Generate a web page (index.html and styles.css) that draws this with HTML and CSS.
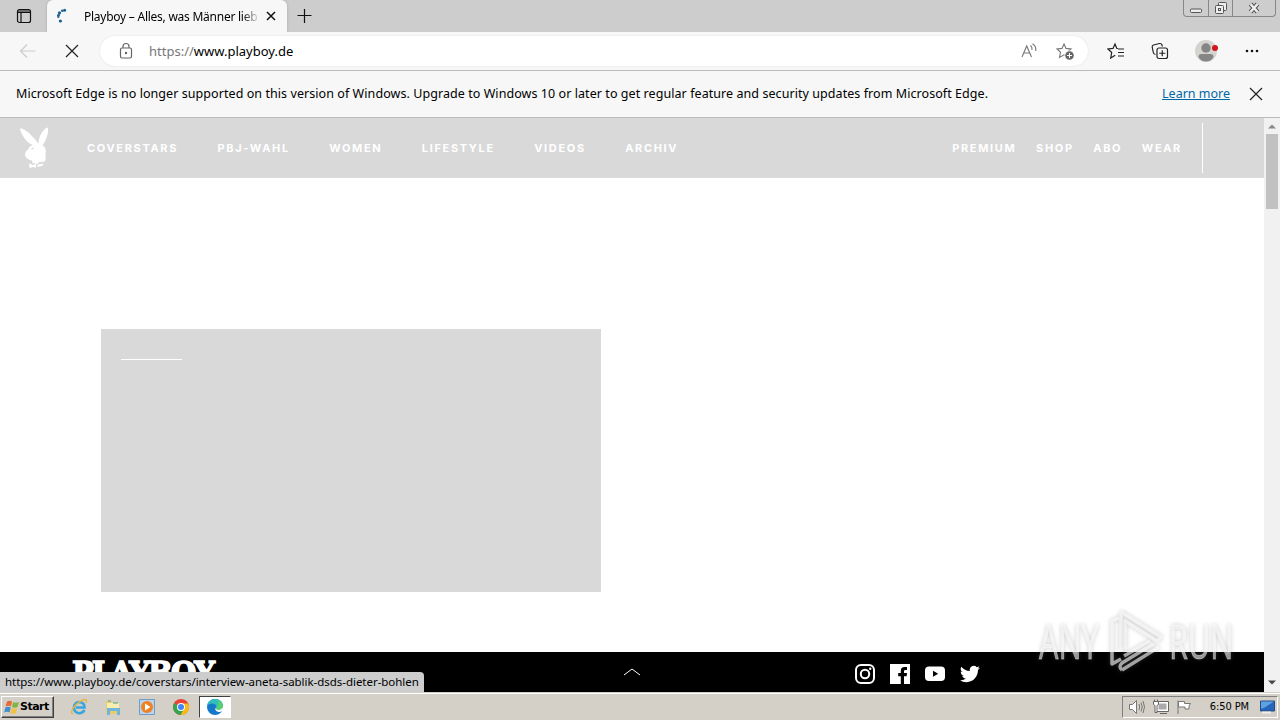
FILE: index.html
```html
<!DOCTYPE html>
<html lang="de">

<head>
    <meta charset="UTF-8">
    <meta name="viewport" content="width=device-width, initial-scale=1.0">
    <title>Playboy – Alles, was Männer lieben</title>
    <link rel="stylesheet" href="styles.css">
</head>

<body>

    <!-- Browser tabs -->
    <div class="tabs">
        <div class="tab-menu">
            <svg width="16" height="16" viewBox="0 0 16 16" fill="none" stroke="#111" stroke-width="1.2">
                <rect x="1.5" y="1.5" width="13" height="13" rx="2" />
                <path d="M2 3h12M2 4.500h12M5 5v9" />
            </svg>
        </div>
        <div class="tab">
            <svg class="spinner" width="16" height="16" viewBox="0 0 16 16" fill="#1b6292">
                <circle cx="9.6" cy="2.3" r="1.5" /><circle cx="7.3" cy="2.8" r="1.3" />
                <circle cx="4.5" cy="4.9" r="1.6" /><circle cx="3.5" cy="7.3" r="1.4" />
                <circle cx="3.3" cy="8.9" r="1.1" /><circle cx="5.4" cy="13" r="1.6" />
            </svg>
            <span class="tab-title">Playboy – Alles, was Männer lieb</span>
            <svg class="tab-close" width="10" height="10" viewBox="0 0 10 10" stroke="#111" stroke-width="1.5">
                <path d="M1 1l8 8M9 1l-8 8" />
            </svg>
        </div>
        <svg class="tab-new" width="16" height="16" viewBox="0 0 16 16" stroke="#111" stroke-width="1.2">
            <path d="M7.500 1v14M.5 7.500h14" />
        </svg>
        <div class="window-buttons">
            <span class="win-min"><svg width="14" height="6" viewBox="0 0 14 6"><rect x="1.5" y="1" width="11" height="3.5" rx="1" fill="#eee" stroke="#555" /></svg></span>
            <span class="win-max"><svg width="14" height="14" viewBox="0 0 14 14" fill="#eee" stroke="#555"><rect x="4.500" y="1.500" width="8" height="8" rx="1" /><rect x="1.500" y="4.500" width="8" height="8" rx="1" /><rect x="4.500" y="7.500" width="2" height="2" /></svg></span>
            <span class="win-close"><svg width="14" height="14" viewBox="0 0 14 14"><path d="M3.500 3l7 8M10.500 3l-7 8" stroke="#555" stroke-width="4.500" /><path d="M3.500 3l7 8M10.500 3l-7 8" stroke="#eee" stroke-width="2.500" /></svg></span>
        </div>
    </div>

    <!-- Address bar -->
    <div class="toolbar">
        <svg class="back" width="18" height="16" viewBox="0 0 18 16" fill="none" stroke="#ccc" stroke-width="1.2">
            <path d="M16.500 8H2M8 1.500L1.500 8L8 14.500" />
        </svg>
        <svg class="stop" width="14" height="14" viewBox="0 0 14 14" stroke="#222" stroke-width="1.200">
            <path d="M1 1l12 12M13 1L1 13" />
        </svg>
        <div class="address">
            <svg width="14" height="18" viewBox="0 0 14 18" fill="none" stroke="#666" stroke-width="1.200">
                <rect x="1.500" y="6" width="11" height="10" rx="1.500" />
                <path d="M4 6V4.500a3 3 0 0 1 6 0V6" />
                <circle cx="7" cy="11" r=".6" fill="#666" />
            </svg>
            <span class="url"><span class="scheme">https://</span><span class="host">www.playboy.de</span></span>
            <svg class="read" width="18" height="18" viewBox="0 0 18 18" fill="none" stroke="#777" stroke-width="1.100">
                <path d="M2 15L6.700 4L11.500 15M3.700 11h6M10.500 3.500q2 1.500 1.500 4.500M12.500 1.700q4 2.500 3.200 7.300" />
            </svg>
            <svg class="fav" width="19" height="19" viewBox="0 0 19 19">
                <path d="M8 2l2 4.400 5 .6-3.500 3.300 1 5-4.500-2.500L3.500 15.500l1-5.200L1 7l5-.6z" fill="none" stroke="#777" stroke-width="1.100" />
                <circle cx="13.500" cy="13.500" r="5" fill="#fff" />
                <circle cx="13.500" cy="13.500" r="4.300" fill="#666" />
                <path d="M13.500 11v5M11 13.500h5" stroke="#fff" />
            </svg>
        </div>
        <svg class="favorites" width="18" height="18" viewBox="0 0 18 18" fill="none" stroke="#222" stroke-width="1.200">
            <path d="M11 6.500L9.700 6.300L8 2L6 6.400L1 7l3.700 3.500l-1 5.500l4.500-2.800M11 7h6M11 10.500h6M11 14h6" />
        </svg>
        <svg class="collections" width="18" height="18" viewBox="0 0 18 18" fill="none" stroke="#222" stroke-width="1.200">
            <path d="M4.500 12.500Q2.500 12 2.300 10.500L1.200 5Q1 3.500 2.500 3L8.500 1.500Q10.500 1.300 11 3L11.300 4.500" />
            <rect x="6" y="6" width="10.500" height="10.500" rx="2" />
            <path d="M11.250 8.300v6M8.300 11.250h6" />
        </svg>
        <svg class="profile" width="24" height="22" viewBox="0 0 24 22">
            <circle cx="11" cy="11" r="11" fill="#d3d3d0" />
            <circle cx="11" cy="8" r="4.700" fill="#858585" />
            <path d="M3.500 17q0-3 3-3h9q3 0 3 3q-2.500 4.500-7.500 4.500T3.500 17z" fill="#858585" />
            <circle cx="20" cy="8" r="3" fill="#d4141c" />
        </svg>
        <svg class="more" width="14" height="4" viewBox="0 0 14 4" fill="#111">
            <circle cx="2" cy="2" r="1.300" /><circle cx="7" cy="2" r="1.300" /><circle cx="12" cy="2" r="1.300" />
        </svg>
    </div>

    <div class="notice">
        <span class="notice-text">Microsoft Edge is no longer supported on this version of Windows. Upgrade to Windows 10 or later to get regular feature and security updates from Microsoft Edge.</span>
        <a class="learn" href="#">Learn more</a>
        <svg width="14" height="14" viewBox="0 0 14 14" stroke="#222" stroke-width="1.200">
            <path d="M1 1l12 12M13 1L1 13" />
        </svg>
    </div>

    <div class="viewport">
        <div class="page">
            <header class="header">
                <svg class="bunny" width="30" height="42" viewBox="0 0 30 42" fill="#fff">
                    <path d="M.5 1Q-.5 4 3 9Q7 16 13 18Q9 19 8.500 22Q4.500 25 5 28.500Q7 33 12 33.500L12.500 36L18 37L19 35L25 34.500Q26 31 25.500 27Q27 21 22.500 18.500Q27 12 28 5Q28.500 0 27 .5Q22.500 3 20 9Q18.500 13 18.500 16.500Q14 11 9 6Q4 2 .5 1z" />
                    <path d="M10.500 22.500l2.500-2 1 1-2 1z" fill="#d9d9d9" />
                    <path d="M9 36.500l4 1.500 3-1.200v4l-3-.8-3.500 1zM17 38l6-1.500v2l-5 1.500z" />
                </svg>
                <nav class="menu">
                    <a>COVERSTARS</a>
                    <a>PBJ-WAHL</a>
                    <a>WOMEN</a>
                    <a>LIFESTYLE</a>
                    <a>VIDEOS</a>
                    <a>ARCHIV</a>
                </nav>
                <nav class="menu shop-menu">
                    <a>PREMIUM</a>
                    <a>SHOP</a>
                    <a>ABO</a>
                    <a>WEAR</a>
                </nav>
                <div class="divider"></div>
            </header>

            <main class="content">
                <div class="teaser">
                    <div class="teaser-line"></div>
                </div>
            </main>

            <footer class="footer">
                <div class="wordmark">PLAYBOY</div>
                <svg class="up" width="18" height="10" viewBox="0 0 18 10" fill="none" stroke="#fff">
                    <path d="M1 8l8-6 8 6" />
                </svg>
                <div class="social">
                    <svg width="20" height="20" viewBox="0 0 20 20" fill="none" stroke="#fff" stroke-width="2">
                        <rect x="1" y="1" width="18" height="18" rx="5" />
                        <circle cx="10" cy="10" r="4.200" />
                        <circle cx="15.200" cy="4.800" r="1.200" fill="#fff" stroke="none" />
                    </svg>
                    <svg width="20" height="20" viewBox="0 0 20 20">
                        <path d="M0 0h20v20H0z" fill="#fff" />
                        <path d="M10.800 20v-7.800H8.200V9h2.600V6.700Q10.800 3 14.500 3H17v2.900h-1.700Q14 5.900 14 7.200V9h3l-.4 3.200H14V20z" fill="#000" />
                    </svg>
                    <svg width="20" height="20" viewBox="0 0 20 20">
                        <rect y="2.500" width="20" height="14.500" rx="4" fill="#fff" />
                        <path d="M8 6.700v6l5.200-3z" fill="#000" />
                    </svg>
                    <svg width="20" height="20" viewBox="0 0 24 24" fill="#fff">
                        <path d="M23.950 4.570a10 10 0 0 1-2.820.77 4.960 4.960 0 0 0 2.160-2.720c-.95.550-2 .95-3.130 1.180a4.920 4.920 0 0 0-8.380 4.480C7.690 8.100 4.070 6.130 1.640 3.160a4.920 4.920 0 0 0 1.520 6.570 4.900 4.900 0 0 1-2.230-.61v.06a4.920 4.920 0 0 0 3.950 4.830 5 5 0 0 1-2.210.08 4.940 4.940 0 0 0 4.600 3.420A9.870 9.870 0 0 1 0 19.540a14 14 0 0 0 7.550 2.210c9.050 0 14-7.500 14-13.980 0-.21 0-.42-.02-.63a9.940 9.940 0 0 0 2.420-2.570z" />
                    </svg>
                </div>
            </footer>
        </div>

        <div class="scrollbar">
            <svg width="8" height="5" viewBox="0 0 8 5" fill="#888"><path d="M0 4.500L4 .5l4 4z" /></svg>
            <div class="thumb"></div>
            <svg class="down" width="8" height="5" viewBox="0 0 8 5" fill="#444"><path d="M0 .5l4 4 4-4z" /></svg>
        </div>

        <div class="status">https://www.playboy.de/coverstars/interview-aneta-sablik-dsds-dieter-bohlen</div>

        <div class="watermark">
            <span class="any">ANY</span>
            <svg width="60" height="64" viewBox="0 0 60 64" fill="none" stroke-linejoin="round">
                <path d="M11 9L4 12V55L13 50M13 3L53 28L49 32L17 12V40M16 47L42 32M14 61L51 38M13 3V42M14 61Q10 58 14 54L45 35" />
            </svg>
            <span class="run">RUN</span>
        </div>
    </div>

    <!-- Windows taskbar -->
    <div class="taskbar">
        <div class="start">
            <svg width="16" height="16" viewBox="0 0 16 16">
                <path d="M3 2.500q2.500-1.700 5 0L7 7.500q-2.500-1.500-5.500 0z" fill="#e66b35" />
                <path d="M9 3q2.500 1.500 6 0l-1.500 5q-3 1.500-5.500 0z" fill="#80b544" />
                <path d="M1.300 8.500q2.500-1.500 5.500 0l-1.300 5q-2.500-1.600-5.300 0z" fill="#438fcd" />
                <path d="M7.800 9q2.500 1.500 5.500 0l-1.500 5q-2.500 1.700-5.300 0z" fill="#f2c13d" />
            </svg>
            <span>Start</span>
        </div>
        <div class="launch">
            <svg width="18" height="18" viewBox="0 0 18 18" fill="none">
                <path d="M14.500 12Q12 16 8 15Q4 14 4 9.500Q4.500 4 9.500 4Q14.500 4.500 14.500 9.500H6" stroke="#39a5df" stroke-width="2.600" />
                <path d="M3 16Q-.5 15 4 9Q9 3 14.500 1.500Q17.500 1.500 16 5" stroke="#e5b63d" stroke-width="1.300" />
            </svg>
            <svg width="18" height="18" viewBox="0 0 18 18">
                <path d="M2 3h5l1 2h7v11H2z" fill="#e8cd70" />
                <path d="M3 5h12v5H3z" fill="#f8edb3" />
                <path d="M3 10h13v7h-3v-4H6v4H3z" fill="#70b6da" />
                <path d="M4 3h3M9 5h5" stroke="#57a46b" />
            </svg>
            <svg width="18" height="18" viewBox="0 0 18 18">
                <path d="M1.500 1.500h15v15h-15z" fill="#b9d4ec" stroke="#6d9dca" />
                <circle cx="9" cy="9" r="6" fill="#ef8122" />
                <path d="M7 5.500v7l5.500-3.500z" fill="#fff" />
            </svg>
            <svg width="18" height="18" viewBox="0 0 18 18">
                <circle cx="9" cy="9" r="8" fill="#e94335" />
                <path d="M9 9L2.100 5A8 8 0 0 0 8.600 17L12.500 11z" fill="#35a553" />
                <path d="M9 5.500h7.200A8 8 0 0 1 8.600 17L12 11z" fill="#f8bc15" />
                <circle cx="9" cy="9" r="4" fill="#fff" />
                <circle cx="9" cy="9" r="3" fill="#4285f4" />
            </svg>
        </div>
        <div class="running">
            <svg width="18" height="18" viewBox="0 0 18 18">
                <circle cx="9" cy="9" r="8" fill="#1479ca" />
                <path d="M1.200 7.500Q2.500 1 9 1Q16.500 1.200 17 8Q16.500 12 12 12Q9 11.500 10.500 9Q10 5.500 6 5.500Q3 5.500 1.200 7.500z" fill="#33bdbb" />
                <path d="M12 2Q17 4.500 17 8.500Q16.500 12 12 12Q9 11.500 10.500 9Q13 7 12 2z" fill="#59cf70" />
                <path d="M10 8.500Q8 13 12.500 14Q14.500 14.300 16 12.800Q18 11 17.500 8Q16 12 12 12Q9 11 10 8.500z" fill="#fff" />
            </svg>
        </div>
        <div class="tray">
            <svg width="18" height="16" viewBox="0 0 18 16" fill="none" stroke="#777">
                <path d="M1.500 5.500h3l4-4v13l-4-4h-3z" fill="#fff" />
                <path d="M11 5q1.500 3 0 6M13 3.500q2.500 4.500 0 9M15 2q3 6 0 12" />
            </svg>
            <svg width="18" height="16" viewBox="0 0 18 16" fill="none" stroke="#666">
                <path d="M5.500 3.500h10v8h-10z" fill="#aaa" stroke="#fff" stroke-width="2" />
                <path d="M4.500 2.500h12v10h-12zM8 14.500h7" />
                <path d="M1.500 2.500h5v3l-1.500 1v7h-2v-7l-1.500-1z" fill="#fff" />
                <path d="M2.500 .5v2M5.500 .5v2" />
            </svg>
            <svg width="18" height="16" viewBox="0 0 18 16" fill="#fff" stroke="#777">
                <path d="M2 1.500v13.500M2.500 2.500h6v2h6l-1.500 2.500v3H9V8H2.500z" />
            </svg>
            <span class="clock">6:50 PM</span>
            <svg width="18" height="14" viewBox="0 0 18 14">
                <path d="M1.500 1h14v10h-14z" fill="#2566bc" stroke="#274c82" />
                <path d="M2 1.500h13L5 8l-3 .5z" fill="#5ca1e0" />
                <path d="M3 12.500h9" stroke="#eee" stroke-width="2" />
            </svg>
        </div>
    </div>

</body>

</html>
```
FILE: styles.css
```css
* {
    box-sizing: border-box;
}

body {
    margin: 0;
    width: 1280px;
    height: 720px;
    overflow: hidden;
    display: flex;
    flex-direction: column;
    background: #fff;
    color: #000;
    font-family: "Noto Sans", "Open Sans", sans-serif;
    font-size: 12.5px;
}

svg {
    display: block;
    flex: none;
}

/* Tabs */
.tabs {
    height: 32px;
    flex: none;
    display: flex;
    background: #cdcdcd;
}

.tab-menu {
    width: 47px;
    padding: 8px 0 0 16px;
    border-radius: 0 0 6px 0;
}

.tab {
    width: 240px;
    display: flex;
    align-items: center;
    padding: 0 11px 0 8px;
    background: #f7f7f7;
    border-radius: 6px 6px 0 0;
    box-shadow: 0 0 3px #aaa;
}

.tab-title {
    width: 176px;
    margin-left: 13px;
    overflow: hidden;
    white-space: nowrap;
    font-size: 12px;
    letter-spacing: -0.25px;
    mask-image: linear-gradient(to right, #000 90%, transparent);
}

.tab-close {
    margin-left: 6px;
}

.tab-new {
    margin: 8px 0 0 10px;
}

.window-buttons {
    display: flex;
    width: 93px;
    height: 17px;
    margin-left: auto;
    margin-right: 4px;
    border: 1px solid #888;
    border-top: none;
    border-radius: 0 0 4px 4px;
}

.window-buttons span {
    display: flex;
    align-items: center;
    justify-content: center;
    width: 25px;
    border-right: 1px solid #888;
}

.window-buttons .win-min {
    padding-top: 5px;
}

.window-buttons .win-close {
    width: 42px;
    border-right: none;
}

/* Toolbar */
.toolbar {
    height: 39px;
    flex: none;
    display: flex;
    align-items: center;
    padding: 0 21px 0 19px;
    background: #f7f7f7;
    border-bottom: 1px solid #bbb;
}

.stop {
    margin-left: 28px;
}

.address {
    display: flex;
    align-items: center;
    width: 988px;
    height: 30px;
    margin-left: 21px;
    padding: 0 13px 0 19px;
    background: #fff;
    border-radius: 15px;
    box-shadow: 0 0 2px #ddd;
}

.url {
    margin-left: 16px;
    font-size: 13px;
}

.scheme {
    color: #777;
}

.read {
    margin-left: auto;
}

.fav {
    margin-left: 18px;
}

.favorites {
    margin-left: 19px;
}

.collections {
    margin-left: 26px;
}

.profile {
    margin-left: 26px;
}

.more {
    margin-left: auto;
}

/* Notice */
.notice {
    height: 47px;
    flex: none;
    display: flex;
    align-items: center;
    padding: 0 17px 0 16px;
    background: #f7f7f7;
    border-bottom: 1px solid #bbb;
    white-space: nowrap;
}

.notice-text {
    padding-bottom: 2px;
    letter-spacing: 0.065px;
}

.learn {
    margin-left: auto;
    margin-right: 19px;
    padding-bottom: 2px;
    color: #0067a5;
}

/* Web page */
.viewport {
    position: relative;
    display: flex;
    height: 574px;
    flex: none;
}

.page {
    width: 1264px;
    display: flex;
    flex-direction: column;
}

.header {
    height: 60px;
    display: flex;
    align-items: center;
    padding-left: 20px;
    background: #d9d9d9;
}

.menu {
    display: flex;
    gap: 39.4px;
    margin-left: 37px;
    color: #fff;
    font: bold 11px Inter, sans-serif;
    letter-spacing: 1.66px;
}

.shop-menu {
    gap: 19.6px;
    margin-left: auto;
}

.divider {
    width: 1px;
    height: 50px;
    margin: 0 61px 0 20px;
    background: #fff;
}

.content {
    flex: 1;
    padding: 151px 0 0 101px;
}

.teaser {
    width: 500px;
    height: 263px;
    padding: 30px 20px;
    background: #d9d9d9;
}

.teaser-line {
    width: 61px;
    height: 1px;
    background: #fff;
}

.footer {
    height: 40px;
    display: flex;
    align-items: center;
    padding-left: 72px;
    background: #000;
    overflow: hidden;
}

.wordmark {
    width: 146px;
    height: 40px;
    color: #fff;
    font: bold 29px/43px "DejaVu Serif", serif;
    letter-spacing: -2px;
    -webkit-text-stroke: 1.5px #fff;
}

.up {
    margin-left: 405px;
}

.social {
    display: flex;
    gap: 15px;
    margin-left: 214px;
    padding-top: 4px;
}

.scrollbar {
    width: 16px;
    display: flex;
    flex-direction: column;
    align-items: center;
    padding: 6px 0 7px;
    background: #f1f1f1;
}

.thumb {
    width: 12px;
    height: 75px;
    margin-top: 5px;
    background: #c1c1c1;
}

.down {
    margin-top: auto;
}

/* Link preview in the corner */
.status {
    position: absolute;
    left: 0;
    bottom: 0;
    width: 424px;
    height: 20px;
    padding-left: 5px;
    background: #cdcdcd;
    border-radius: 0 4px 0 0;
    font-size: 11.5px;
    letter-spacing: -0.035px;
    line-height: 20px;
    white-space: nowrap;
}

.watermark {
    position: absolute;
    left: 1039px;
    top: 491px;
    display: flex;
    align-items: center;
    color: rgba(255, 255, 255, 0.55);
    font: 48px/64px "Open Sans", sans-serif;
    filter: drop-shadow(0 0 2px rgba(110, 110, 110, 0.6));
}

.watermark span {
    width: 64px;
    transform: scaleX(0.64);
    transform-origin: left;
    -webkit-text-stroke: 1px rgba(255, 255, 255, 0.4);
}

.watermark svg {
    margin: 0 1px 0 5px;
    stroke: rgba(255, 255, 255, 0.6);
    stroke-width: 3.5;
}

/* Taskbar */
.taskbar {
    height: 28px;
    flex: none;
    display: flex;
    align-items: center;
    padding: 2px 2px 2px 1px;
    background: #d4d0c8;
    border-top: 1px solid #d4d0c8;
    box-shadow: inset 0 1px #fff;
}

.start {
    display: flex;
    align-items: center;
    width: 53px;
    height: 22px;
    padding-left: 2px;
    border: 1px solid;
    border-color: #fff #404040 #404040 #fff;
    box-shadow: inset -1px -1px #808080;
    font: bold 11px "DejaVu Sans", sans-serif;
    letter-spacing: -0.5px;
}

.launch {
    display: flex;
    gap: 16px;
    margin-left: 16px;
}

.running {
    display: flex;
    align-items: center;
    justify-content: center;
    width: 32px;
    height: 22px;
    margin-left: 9px;
    background: #fff;
    border: 1px solid;
    border-color: #404040 #fff #fff #404040;
}

.tray {
    display: flex;
    align-items: center;
    width: 156px;
    height: 22px;
    margin-left: auto;
    padding: 0 0 0 5px;
    gap: 6px;
    border: 1px solid;
    border-color: #808080 #fff #fff #808080;
}

.clock {
    margin-left: auto;
    margin-right: 4px;
    font: 11px "DejaVu Sans Condensed", "DejaVu Sans", sans-serif;
    letter-spacing: -0.1px;
    white-space: nowrap;
}
```
